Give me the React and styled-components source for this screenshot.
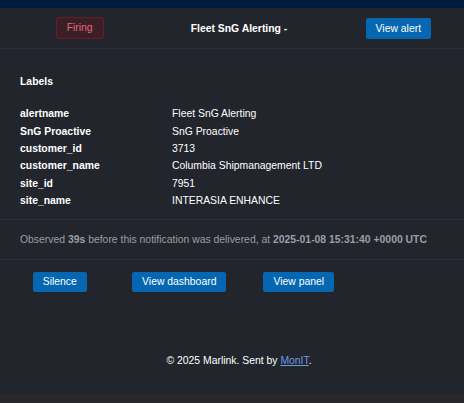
import React from "react";
import styled, { createGlobalStyle } from "styled-components";

const Global = createGlobalStyle`
  html, body { margin: 0; padding: 0; overflow: hidden; background: #28282a; }
  body { font-family: "Liberation Sans", Arial, sans-serif; font-size: 10.4px; color: #ffffff; }
`;

const Page = styled.div`
  width: 478px;
  background: #22252c;
`;

const TopBar = styled.div`
  height: 8px;
  background: #001c3d;
`;

const Header = styled.div`
  display: grid;
  grid-template-columns: repeat(3, 1fr);
  align-items: center;
  justify-items: center;
  height: 40px;
  border-bottom: 1px solid #2c2f37;
`;

const Badge = styled.span`
  display: inline-block;
  padding: 4px 10px;
  line-height: 12px;
  border: 1px solid #6c1a25;
  background: #3a1f27;
  color: #e5686e;
  border-radius: 2px;
`;

const Title = styled.span`
  font-weight: bold;
  color: #ffffff;
`;

const Button = styled.a`
  display: inline-block;
  padding: 0 10px;
  height: ${(p) => p.$h || 20}px;
  line-height: ${(p) => p.$h || 20}px;
  background: #0567b1;
  color: #ffffff;
  border-radius: 2px;
  text-decoration: none;
`;

const Section = styled.div`
  padding: ${(p) => p.$pad};
  border-bottom: 1px solid #2c2f37;
`;

const SectionTitle = styled.div`
  font-weight: bold;
  line-height: 14px;
  margin-bottom: 16.5px;
`;

const LabelTable = styled.div`
  display: grid;
  grid-template-columns: 152px 1fr;
  grid-auto-rows: 17.4px;
  align-items: center;
`;

const Key = styled.div`
  font-weight: bold;
`;

const Value = styled.div``;

const Observed = styled.div`
  line-height: 14px;
  color: #9a9ea7;
  b { font-weight: bold; }
`;

const Actions = styled.div`
  display: grid;
  grid-template-columns: repeat(4, 1fr);
  justify-items: center;
  padding: 12.5px 0;
`;

const Footer = styled.div`
  text-align: center;
  line-height: 14px;
  padding: 49.5px 0 26px;
  a { color: #6a9be0; text-decoration: underline; }
`;

const labels = [
  ["alertname", "Fleet SnG Alerting"],
  ["SnG Proactive", "SnG Proactive"],
  ["customer_id", "3713"],
  ["customer_name", "Columbia Shipmanagement LTD"],
  ["site_id", "7951"],
  ["site_name", "INTERASIA ENHANCE"],
];

export default function App() {
  return (
    <Page>
      <Global />
      <TopBar />
      <Header>
        <Badge>Firing</Badge>
        <Title>Fleet SnG Alerting -</Title>
        <Button $h={21}>View alert</Button>
      </Header>
      <Section $pad="25.5px 20px 9.3px">
        <SectionTitle>Labels</SectionTitle>
        <LabelTable>
          {labels.map(([k, v]) => (
            <React.Fragment key={k}>
              <Key>{k}</Key>
              <Value>{v}</Value>
            </React.Fragment>
          ))}
        </LabelTable>
      </Section>
      <Section $pad="13px 20px 12px">
        <Observed>
          Observed <b>39s</b> before this notification was delivered, at{" "}
          <b>2025-01-08 15:31:40 +0000 UTC</b>
        </Observed>
      </Section>
      <Actions>
        <Button>Silence</Button>
        <Button>View dashboard</Button>
        <Button>View panel</Button>
        <span />
      </Actions>
      <Footer>
        © 2025 Marlink. Sent by <a href="#">MonIT</a>.
      </Footer>
    </Page>
  );
}
